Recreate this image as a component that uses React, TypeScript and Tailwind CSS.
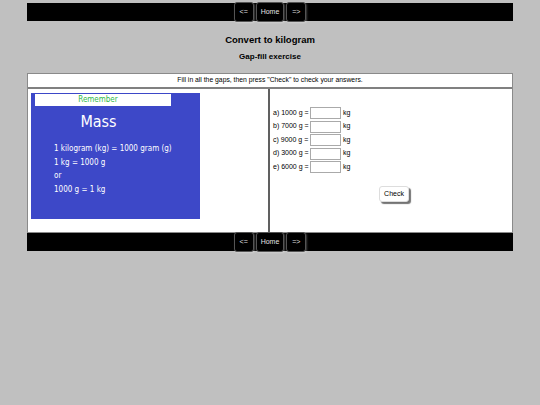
import React from 'react';

const questions = [
    { label: 'a) 1000 g =' },
    { label: 'b) 7000 g =' },
    { label: 'c) 9000 g =' },
    { label: 'd) 3000 g =' },
    { label: 'e) 6000 g =' },
];

const NavBar: React.FC = () => (
    <div className="h-[18px] bg-black flex items-center justify-center gap-[2px]">
        {['<=', 'Home', '=>'].map((label) => (
            <button
                key={label}
                className="h-[20px] px-[4px] bg-black text-[#e0e0e0] text-[7px] rounded-[3px] border border-[#555] shadow-[1px_1px_2px_rgba(255,255,255,0.25)] flex items-center justify-center min-w-[20px]"
            >
                {label}
            </button>
        ))}
    </div>
);

export default function App() {
    return (
        <div className="w-[540px] h-[405px] bg-[#c0c0c0] pt-[3px] font-['Liberation_Sans',Arial,sans-serif]">
            <div className="ml-[27px] w-[486px]">
                <NavBar />

                {/* Heading */}
                <div className="pt-[13px] text-center text-black">
                    <h1 className="text-[9.5px] leading-[12px] font-bold">Convert to kilogram</h1>
                    <h2 className="mt-[6px] text-[8px] leading-[10px] font-bold">Gap-fill exercise</h2>
                </div>

                {/* Exercise table */}
                <div className="mt-[11px] border border-[#8a8a8a] bg-white">
                    <div className="h-[15px] flex items-center justify-center text-[6.8px] text-black border-b-2 border-[#808080]">
                        Fill in all the gaps, then press "Check" to check your answers.
                    </div>
                    <div className="flex h-[143px]">
                        <div className="w-[242px] border-r-2 border-[#606060] pl-[3px] pt-[4px]">
                            <div className="w-[169px] h-[126px] bg-[#3d48c8] pt-[1px] px-[4px] font-['DejaVu_Sans_Condensed','DejaVu_Sans',sans-serif] text-white">
                                <div className="w-[136px] h-[12px] bg-white text-[#2fb84a] text-[8px] leading-[12px] text-center pr-[10px]">
                                    Remember
                                </div>
                                <div className="mt-[7px] text-[16px] leading-[18px] text-center pr-[34px]">Mass</div>
                                <div className="mt-[11px] pl-[19px] text-[8px] leading-[13.5px]">
                                    <div>1 kilogram (kg) = 1000 gram (g)</div>
                                    <div>1 kg = 1000 g</div>
                                    <div>or</div>
                                    <div>1000 g = 1 kg</div>
                                </div>
                            </div>
                        </div>
                        <div className="flex-1 pl-[3px] pt-[18px] text-[7px] text-black">
                            <div className="flex flex-col gap-[1.5px]">
                                {questions.map((q) => (
                                    <div key={q.label} className="flex items-center h-[12px]">
                                        <span className="w-[37px]">{q.label}</span>
                                        <input className="w-[31px] h-[12px] border border-[#aaa] bg-white" />
                                        <span className="ml-[2px]">kg</span>
                                    </div>
                                ))}
                            </div>
                            <div className="mt-[13px] ml-[106px]">
                                <button className="w-[30px] h-[16px] bg-white text-[7px] rounded-[3px] border border-[#ddd] shadow-[2px_2px_1px_rgba(0,0,0,0.55)]">
                                    Check
                                </button>
                            </div>
                        </div>
                    </div>
                </div>

                <NavBar />
            </div>
        </div>
    );
}
